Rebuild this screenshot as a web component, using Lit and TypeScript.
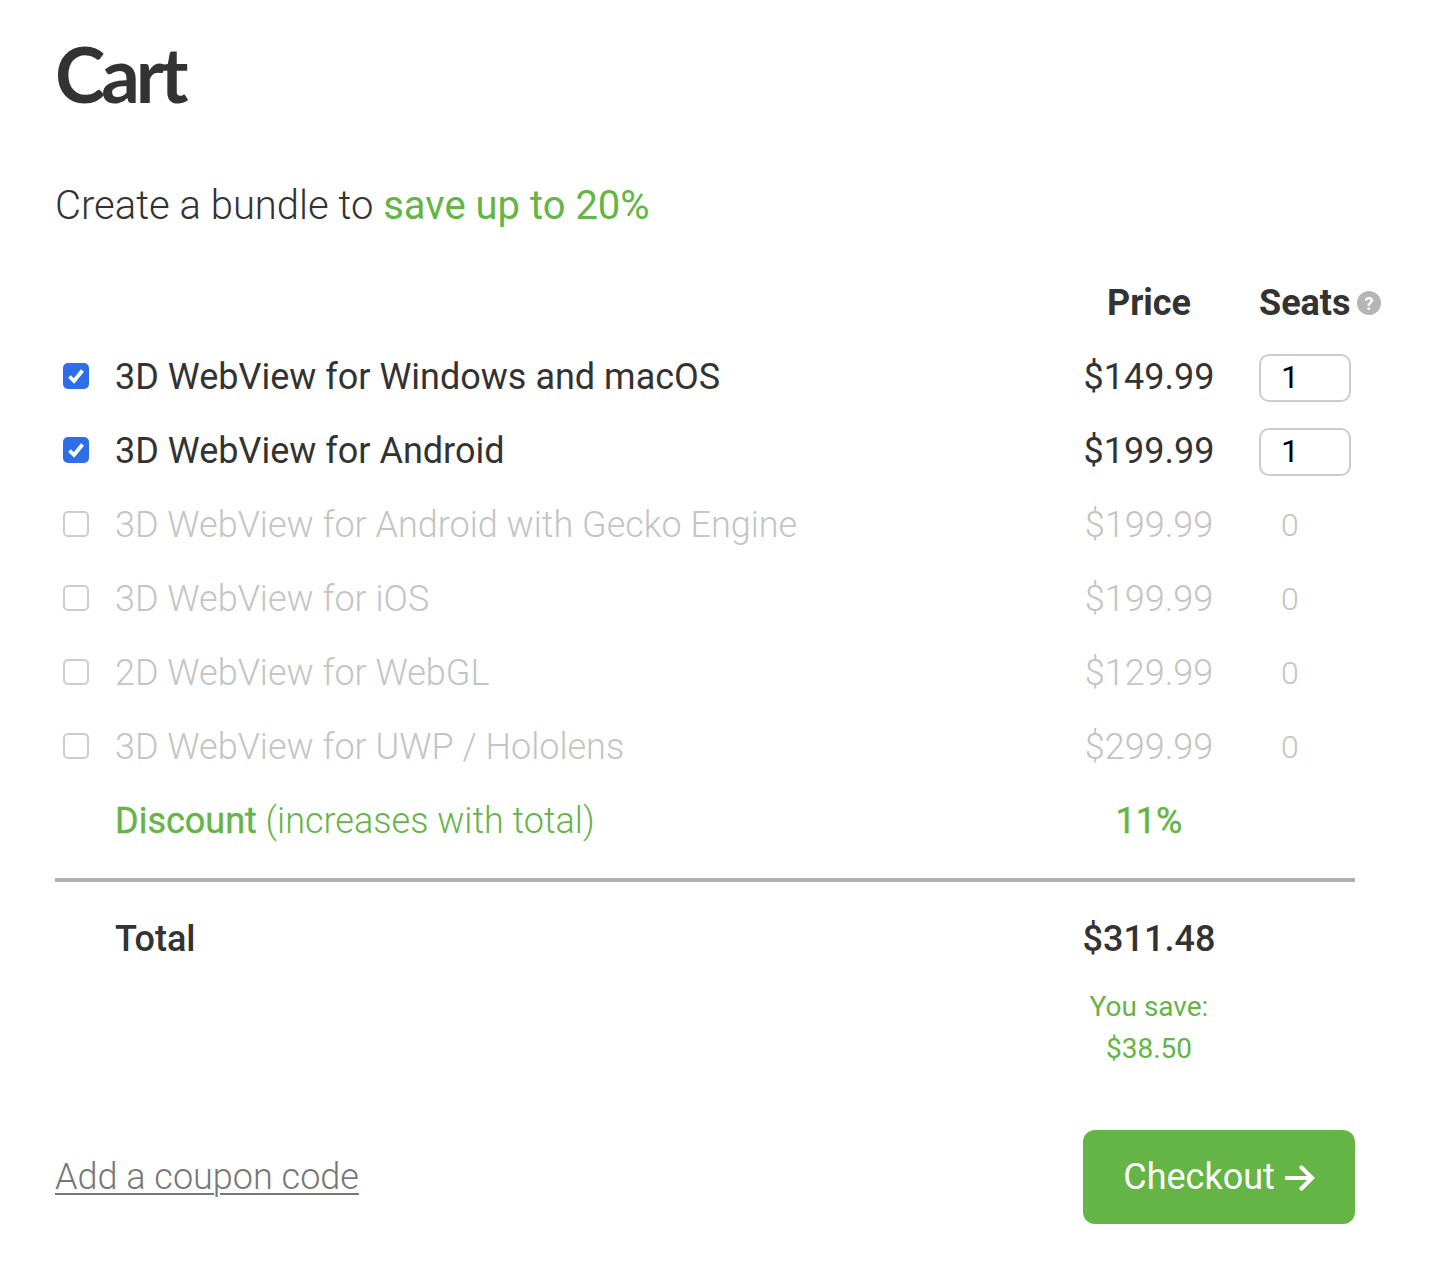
import { LitElement, html, css, svg } from "lit";
import { customElement } from "lit/decorators.js";

const ITEMS = [
  { name: "3D WebView for Windows and macOS", price: "$149.99", on: true },
  { name: "3D WebView for Android", price: "$199.99", on: true },
  { name: "3D WebView for Android with Gecko Engine", price: "$199.99", on: false },
  { name: "3D WebView for iOS", price: "$199.99", on: false },
  { name: "2D WebView for WebGL", price: "$129.99", on: false },
  { name: "3D WebView for UWP / Hololens", price: "$299.99", on: false },
];

@customElement("app-root")
export class AppRoot extends LitElement {
  static styles = css`
    :host {
      display: block;
      box-sizing: border-box;
      width: 1435px;
      min-height: 1271px;
      padding: 0 80px 0 55px;
      background: #fff;
      color: #333;
      font-family: Roboto, "Liberation Sans", sans-serif;
      font-size: 36px;
    }
    h1 {
      margin: 0;
      padding-top: 28px;
      height: 96px;
      font-family: Lato, "Liberation Sans", sans-serif;
      font-weight: 700;
      font-size: 76px;
      line-height: 92px;
      letter-spacing: -4px;
      color: #333;
    }
    .lead {
      margin: 0;
      padding-top: 55px;
      height: 87px;
      font-size: 40px;
      line-height: 54px;
      font-weight: 300;
    }
    .green { color: #65b446; }
    .lead .green { font-weight: 400; }
    .row {
      display: grid;
      grid-template-columns: 60px 1fr 180px 96px;
      align-items: center;
      height: 74px;
    }
    .row > .price { text-align: center; margin-left: -20px; width: 180px; }
    .head { font-weight: 700; font-size: 36px; }
    .seats-head { display: flex; align-items: center; gap: 6px; white-space: nowrap; }
    .help { width: 24px; height: 24px; flex: none; }
    .box {
      display: block;
      box-sizing: border-box;
      width: 26px;
      height: 26px;
      margin: -2px 0 0 8px;
      border-radius: 5px;
      border: 2px solid #ccc;
      background: #fff;
    }
    .box.on { border: none; background: #2e6fe9; }
    .box svg { display: block; width: 26px; height: 26px; }
    .off { color: #c4c4c4; font-weight: 300; }
    .zero { padding-left: 22px; font-size: 32px; }
    .seat { padding-top: 2px; }
    input {
      box-sizing: border-box;
      display: block;
      width: 92px;
      height: 48px;
      margin: 0;
      padding: 0 0 2px 20px;
      border: 2px solid #ccc;
      border-radius: 10px;
      background: #fff;
      color: #000;
      font-family: Roboto, "Liberation Sans", sans-serif;
      font-size: 32px;
      outline: none;
    }
    .light { font-weight: 300; }
    .disc { font-weight: 400; -webkit-text-stroke: 0.4px #65b446; }
    .rule { height: 4px; background: #b0b0b0; margin-top: 20px; }
    .total { font-weight: 500; font-size: 36px; height: 114px; }
    .save {
      display: grid;
      grid-template-columns: 60px 1fr 180px 96px;
      margin-top: -10px;
      font-size: 28px;
      line-height: 42px;
      text-align: center;
    }
    .save > div { grid-column: 3; margin-left: -20px; width: 180px; }
    .foot {
      display: flex;
      justify-content: space-between;
      align-items: center;
      margin-top: 60px;
    }
    .coupon {
      color: #777;
      font-weight: 300;
      text-decoration: underline;
      text-underline-offset: 4px;
      text-decoration-thickness: 2px;
    }
    .btn {
      display: flex;
      align-items: center;
      justify-content: center;
      gap: 10px;
      width: 272px;
      height: 94px;
      border: none;
      border-radius: 12px;
      background: #65b446;
      color: #fff;
      font-family: inherit;
      font-size: 36px;
      padding: 0;
    }
    .btn svg { width: 30px; height: 26px; margin-top: 2px; }
  `;

  private check() {
    return svg`<path d="M6.5 13.5 L11 18 L19.5 7.5" fill="none" stroke="#fff" stroke-width="3.8"/>`;
  }

  render() {
    return html`
      <h1>Cart</h1>
      <p class="lead">Create a bundle to <span class="green">save up to 20%</span></p>
      <div class="row head">
        <span></span><span></span>
        <span class="price">Price</span>
        <span class="seats-head">Seats
          <svg class="help" viewBox="0 0 24 24"><circle cx="12" cy="12" r="12" fill="#b5b5b5"/><text x="12" y="18.5" text-anchor="middle" font-family="Roboto, sans-serif" font-weight="700" font-size="18" fill="#fff">?</text></svg>
        </span>
      </div>
      ${ITEMS.map(
        (i) => html`
          <div class="row ${i.on ? "" : "off"}">
            <span class="box ${i.on ? "on" : ""}">${i.on ? html`<svg viewBox="0 0 26 26">${this.check()}</svg>` : ""}</span>
            <span>${i.name}</span>
            <span class="price">${i.price}</span>
            ${i.on ? html`<span class="seat"><input type="text" .value=${"1"} /></span>` : html`<span class="zero">0</span>`}
          </div>
        `
      )}
      <div class="row green">
        <span></span>
        <span class="light"><span class="disc">Discount</span> (increases with total)</span>
        <span class="price disc">11%</span>
        <span></span>
      </div>
      <div class="rule"></div>
      <div class="row total">
        <span></span><span>Total</span><span class="price">$311.48</span><span></span>
      </div>
      <div class="save green"><div>You save:</div><div>$38.50</div></div>
      <div class="foot">
        <a class="coupon">Add a coupon code</a>
        <button class="btn">Checkout
          <svg viewBox="0 0 30 26"><path d="M1 13 H27 M16.5 2.5 L27 13 L16.5 23.5" fill="none" stroke="#fff" stroke-width="4.2" stroke-linecap="round"/></svg>
        </button>
      </div>
    `;
  }
}
